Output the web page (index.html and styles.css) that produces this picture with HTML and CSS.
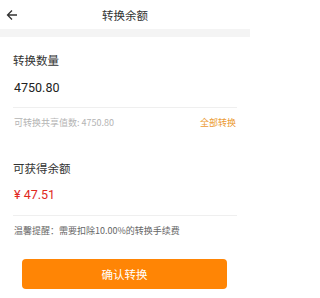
FILE: index.html
```html
<!DOCTYPE html>
<html>
<head>
<meta charset="utf-8">
<link rel="stylesheet" href="styles.css">
</head>
<body>
<div class="header">
  <svg class="back" width="12" height="12" viewBox="0 0 12 12"><path d="M11 6H1.5M6 1.5L1.5 6L6 10.5" fill="none" stroke="#333" stroke-width="1.3"/></svg>
  <div class="title">转换余额</div>
</div>
<div class="band"></div>
<div class="content">
  <div class="label first">转换数量</div>
  <div class="amount">4750.80</div>
  <div class="divider"></div>
  <div class="hint-row">
    <span class="hint">可转换共享值数: 4750.80</span>
    <span class="all">全部转换</span>
  </div>
  <div class="label second">可获得余额</div>
  <div class="amount red">¥ 47.51</div>
  <div class="divider d2"></div>
  <div class="tip">温馨提醒：需要扣除10.00%的转换手续费</div>
</div>
<div class="btn">确认转换</div>
</body>
</html>
```
FILE: styles.css
```css
* { box-sizing: border-box; }
html { background: #fff; }
body {
  margin: 0;
  width: 250px;
  height: 298px;
  background: #fff;
  font-family: "Noto Sans CJK SC", "Noto Sans", sans-serif;
  color: #333;
  overflow: hidden;
}
.header {
  height: 29px;
  display: flex;
  align-items: center;
  justify-content: center;
  position: relative;
}
.back { position: absolute; left: 6px; top: 9px; }
.title { font-size: 11.5px; color: #333; line-height: 16px; }
.band { height: 8px; background: #f4f4f4; }
.content { padding: 0 13px; }
.label { font-size: 11.5px; line-height: 16px; color: #333; }
.label.first { padding-top: 15px; }
.label.second { margin-top: 30px; }
.amount {
  font-family: "Roboto", "Liberation Sans", sans-serif;
  font-size: 12.5px;
  line-height: 18px;
  color: #222;
  margin-top: 11px;
  padding-left: 1px;
}
.amount.red { color: #e0281e; margin-top: 10px; }
.divider { height: 1px; background: #efefef; margin-top: 10px; }
.divider.d2 { margin-top: 11px; }
.hint-row {
  display: flex;
  justify-content: space-between;
  margin-top: 8px;
  font-size: 9px;
  line-height: 14px;
}
.hint { color: #b4b4b4; padding-left: 1px; }
.all { color: #eb9a32; margin-right: 1px; }
.tip {
  margin-top: 8px;
  font-size: 9px;
  line-height: 14px;
  color: #666;
  padding-left: 1px;
}
.btn {
  margin: 21px 23px 0 22px;
  height: 30px;
  background: #ff8505;
  border-radius: 4px;
  color: #fff;
  font-size: 11.5px;
  display: flex;
  align-items: center;
  justify-content: center;
}
```
